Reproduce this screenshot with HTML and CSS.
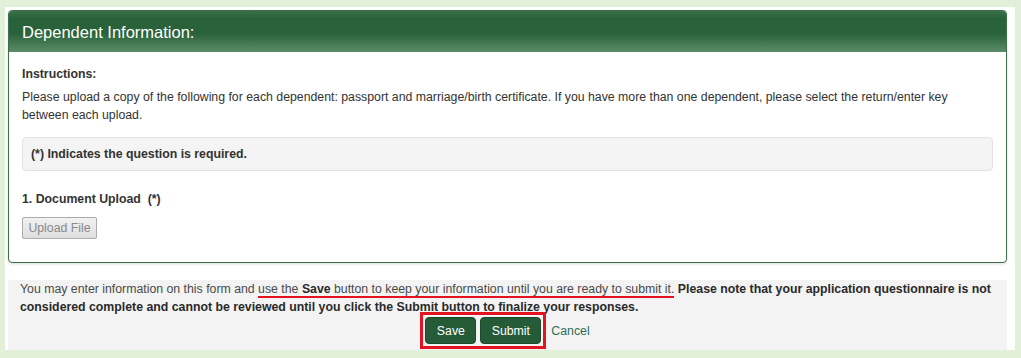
FILE: index.html
```html
<!DOCTYPE html>
<html lang="en">
<head>
    <meta charset="UTF-8">
    <meta name="viewport" content="width=device-width, initial-scale=1.0">
    <title>Dependent Information</title>
    <link rel="stylesheet" href="styles.css">
</head>
<body>
    <div class="wrapper">
        <div class="panel">
            <div class="panel-heading">Dependent Information:</div>
            <div class="panel-body">
                <div class="instructions-title">Instructions:</div>
                <p class="instructions">Please upload a copy of the following for each dependent: passport and marriage/birth certificate. If you have more than one dependent, please select the return/enter key between each upload.</p>

                <div class="required-note">(*) Indicates the question is required.</div>

                <div class="question">1. Document Upload&nbsp; (*)</div>
                <button class="btn-upload" type="button">Upload File</button>
            </div>
        </div>

        <div class="form-footer">
            <p class="footer-note">You may enter information on this form and <span class="marked">use the <b>Save</b> button to keep your information until you are ready to submit it.</span> <b>Please note that your application questionnaire is not considered complete and cannot be reviewed until you click the Submit button to finalize your responses.</b></p>
            <div class="actions">
                <span class="marked-box">
                    <button class="btn btn-save" type="button">Save</button>
                    <button class="btn btn-submit" type="button">Submit</button>
                </span>
                <a href="#" class="cancel">Cancel</a>
            </div>
        </div>
    </div>
</body>
</html>
```

FILE: styles.css
```css
:root {
    --green-dark: #255b37;
    --border-green: #3d6f4a;
    --text-color: #333;
    --background-color: #e2efd9;
    --mark-red: #e3141f;
}

* {
    margin: 0;
    padding: 0;
    box-sizing: border-box;
}

body {
    font-family: "Liberation Sans", Arial, sans-serif;
    font-size: 12.3px;
    line-height: 18px;
    color: var(--text-color);
    background-color: var(--background-color);
}

.wrapper {
    background-color: #fff;
    width: 1010px;
    margin: 7px 0 0 5px;
    padding: 3px 8px 0 3px;
}

.panel {
    border: 1px solid var(--border-green);
    border-radius: 4px;
    background-color: #fff;
    box-shadow: 0 1px 3px rgba(0,0,0,0.15);
    overflow: hidden;
}

.panel-heading {
    height: 41px;
    padding: 0 13px;
    display: flex;
    align-items: center;
    color: #fff;
    font-size: 16.5px;
    background: linear-gradient(#3c714a 0%, #27603a 18%, #2a633b 55%, #5b8b67 100%);
}

.panel-body {
    padding: 13px 13px 23px;
}

.instructions-title {
    font-weight: bold;
    margin-bottom: 5px;
}

.instructions {
    margin-bottom: 13px;
}

.required-note {
    background-color: #f4f4f4;
    border: 1px solid #e3e3e3;
    border-radius: 4px;
    padding: 7px 8px;
    font-weight: bold;
    margin-bottom: 19px;
}

.question {
    font-weight: bold;
    margin-bottom: 9px;
}

.btn-upload {
    display: block;
    width: 75px;
    height: 22px;
    font-family: inherit;
    font-size: 12.3px;
    color: #8a8a8a;
    background: linear-gradient(#f2f2f2, #dedede);
    border: 1px solid #ababab;
    border-radius: 2px;
}

.form-footer {
    margin-top: 17px;
    background-color: #f3f3f3;
    padding: 0 12px 6px;
}

.footer-note {
    color: #4a4a4a;
}

.footer-note b {
    color: #2a2a2a;
}

.marked {
    border-bottom: 2px solid var(--mark-red);
}

.actions {
    margin-top: 1px;
    display: flex;
    justify-content: center;
    align-items: center;
    gap: 10px;
    height: 27px;
}

.marked-box {
    display: flex;
    gap: 4px;
    outline: 3px solid var(--mark-red);
    outline-offset: 2px;
}

.btn {
    height: 27px;
    padding: 0;
    font-family: inherit;
    font-size: 12.3px;
    color: #fff;
    background-color: var(--green-dark);
    border: 1px solid #1d4a2c;
    border-radius: 4px;
}

.btn-save {
    width: 51px;
}

.btn-submit {
    width: 61px;
}

.cancel {
    color: #2f6e55;
    text-decoration: none;
}
```
